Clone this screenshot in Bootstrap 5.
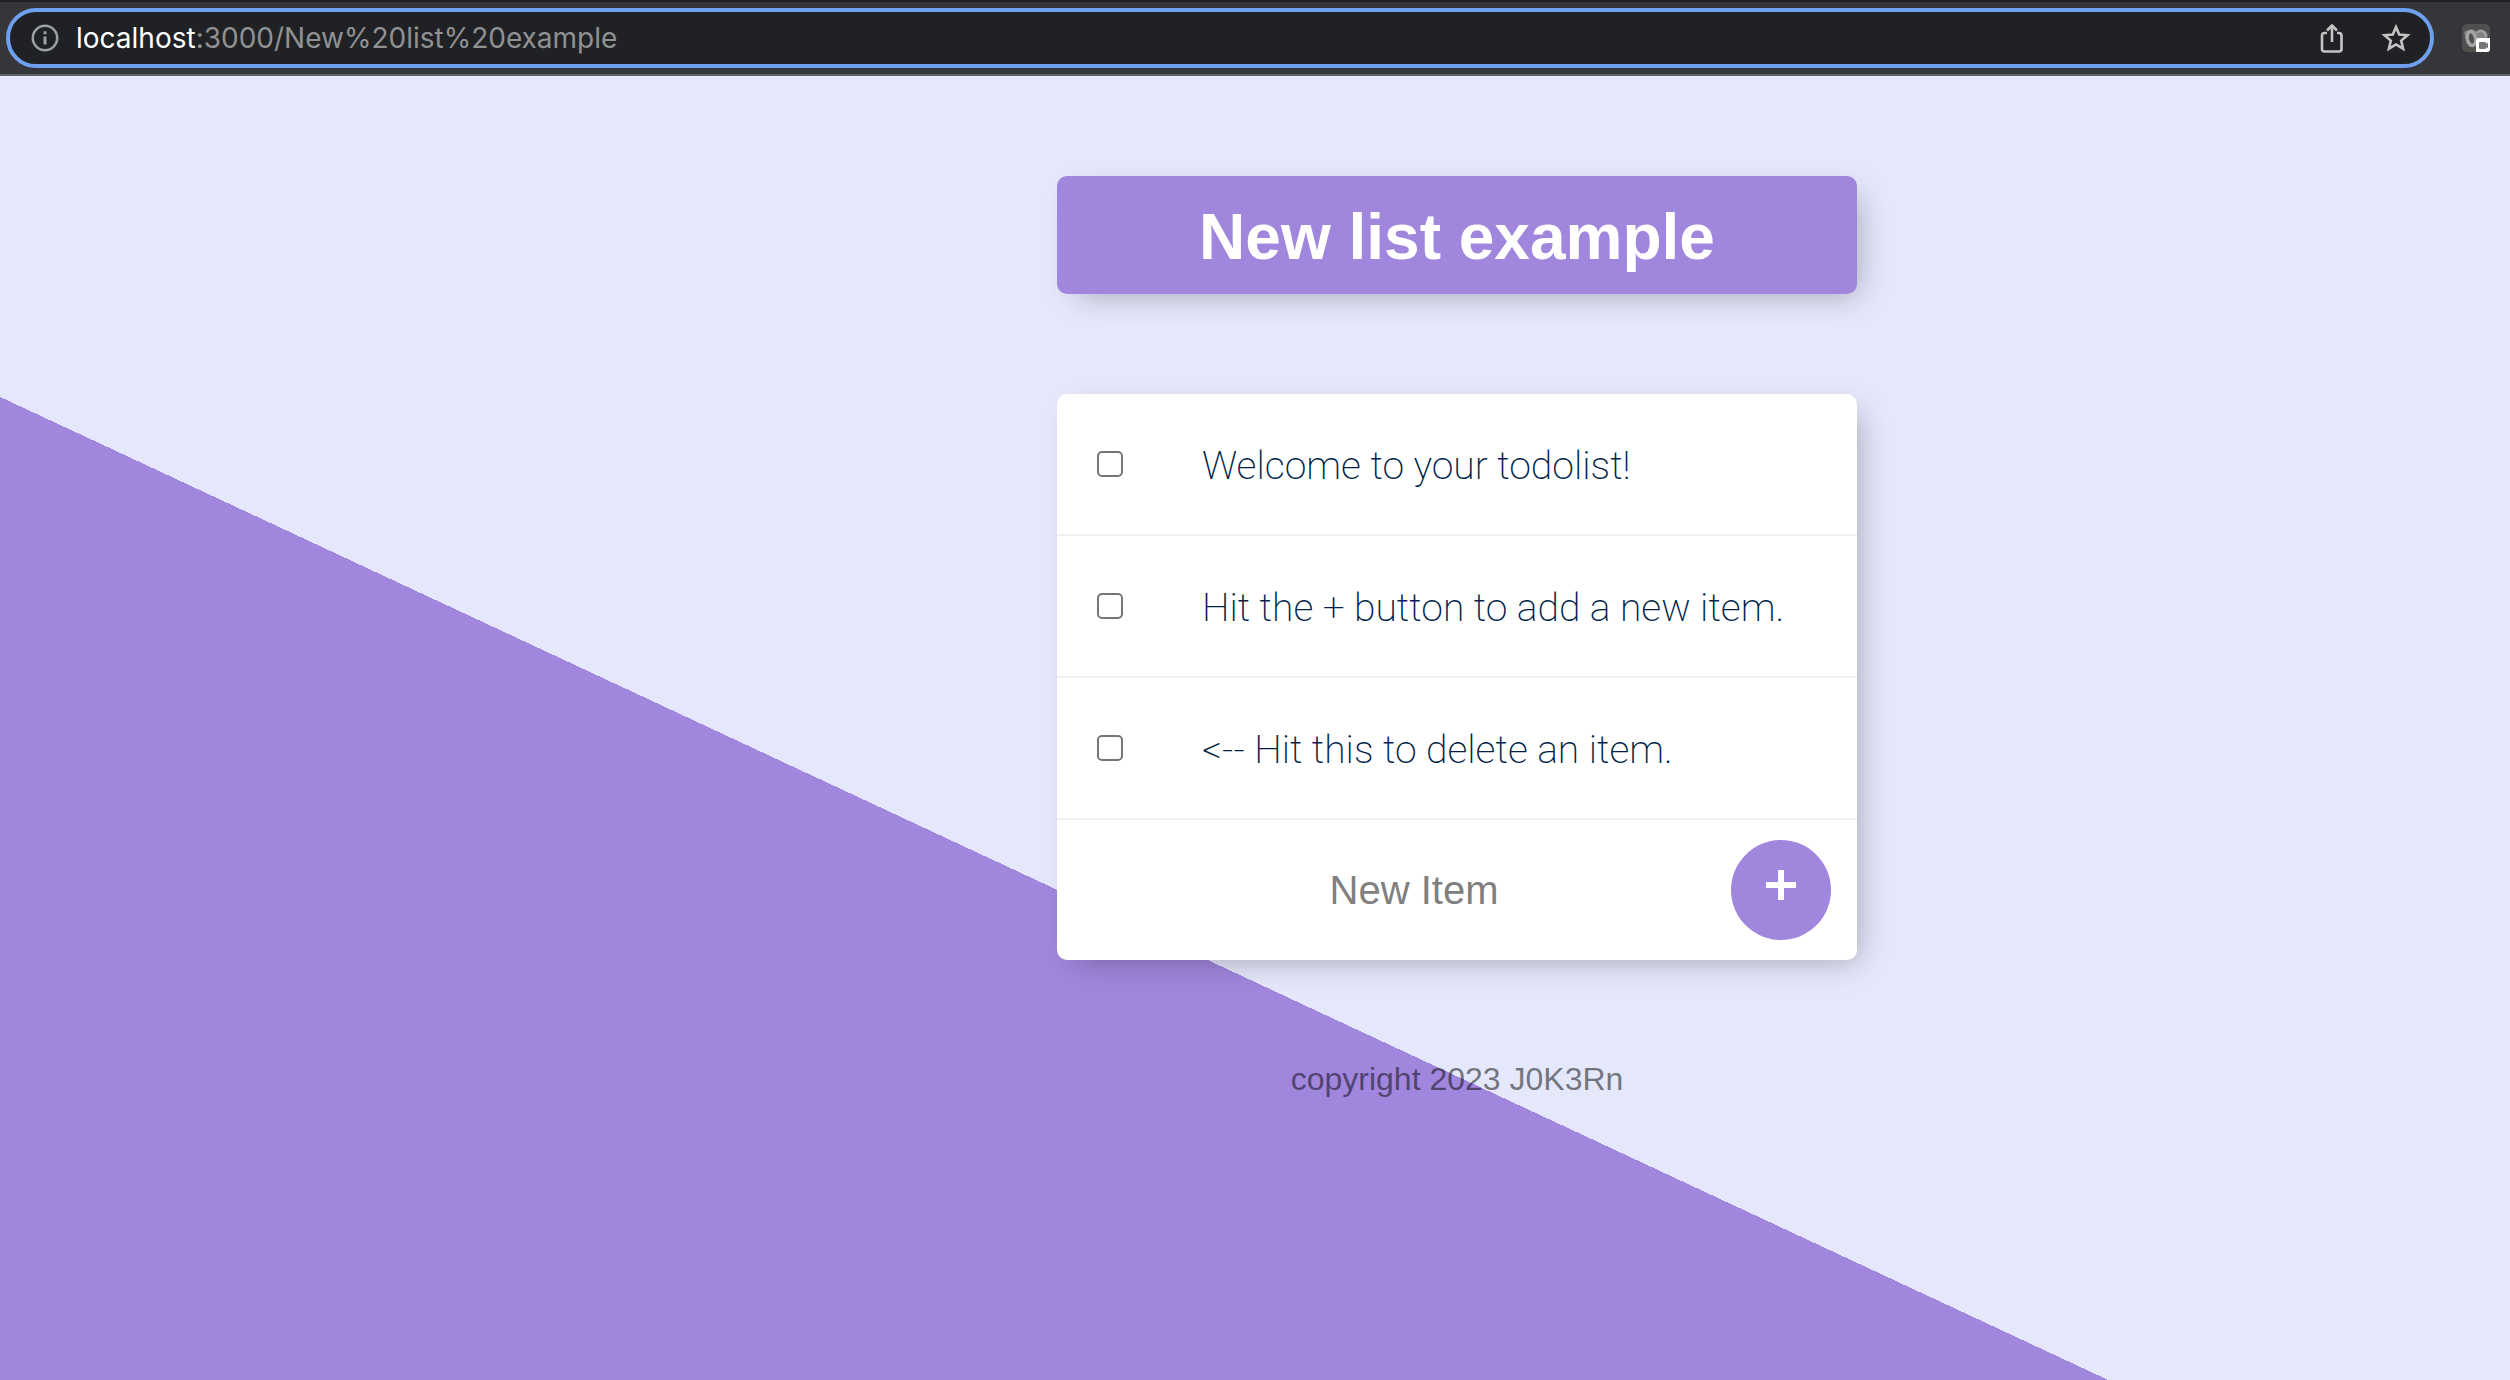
<!DOCTYPE html>
<html lang="en">
<head>
<meta charset="utf-8">
<meta name="viewport" content="width=device-width, initial-scale=1">
<title>New list example</title>
<link rel="stylesheet" href="https://cdn.jsdelivr.net/npm/bootstrap@5.3.0/dist/css/bootstrap.min.css">
<style>
  :root { --purple: #a186dd; --mist: #e5e8fb; --ink: #001f4a; }
  body { background: var(--mist); font-family: "Liberation Sans", Arial, sans-serif; }
  .toolbar { height: 76px; background: #35363a; border-top: 2px solid #202124; border-bottom: 2px solid #5f6065; padding: 0 20px 0 6px; gap: 28px; }
  .address { height: 60px; background: #202124; border: 4px solid #6f9fef; border-radius: 30px; padding: 0 19px 0 20px; }
  .url { font: 28px/36px Inter, sans-serif; color: #909193; margin-left: 16px; outline: 0; }
  .url b { font-weight: 400; color: #fff; }
  .tool { color: #c4c4c4; line-height: 0; }
  .share { margin-right: 30px; }
  .stage { background: linear-gradient(25deg, var(--purple) 891px, var(--mist) 891px); padding: 100px 0 100px 404px; gap: 100px; }
  .panel { width: 800px; border-radius: 10px; box-shadow: 10px 10px 30px -10px rgba(0, 0, 0, .3); }
  .heading { background: var(--purple); color: #fff; padding: 24px 20px 20px; }
  .heading h1 { font-size: 64px; line-height: 74px; }
  .entry { border-bottom: 2px solid #f1f1f1; height: 142px; padding: 0 20px 0 40px; gap: 79px; color: var(--ink); font: 200 39px/46px Roboto, sans-serif; }
  .entry label { padding-top: 4px; }
  .tick { width: 26px; height: 26px; margin: 0; border: 2px solid #767676; }
  .tick.form-check-input[type=checkbox] { border-radius: 5px; }
  .adder { height: 140px; padding: 0 26px 0 40px; }
  .adder input { font-size: 40px; line-height: 46px; }
  .adder input::placeholder { color: #808080; opacity: 1; }
  .plus { width: 100px; height: 100px; background: var(--purple); padding: 0 0 10px; }
  .plus:hover { background: #8f72cf; }
  .copy { width: 800px; font-size: 32px; line-height: 38px; color: rgba(0, 0, 0, .5); }
</style>
</head>
<body class="min-vh-100 d-flex flex-column overflow-hidden">
<header class="toolbar d-flex align-items-center">
  <div class="address d-flex align-items-center flex-grow-1">
    <svg width="30" height="30" viewBox="0 0 30 30" fill="none" stroke="#9aa0a6" stroke-width="2.5" aria-hidden="true"><circle cx="15" cy="15" r="12.2"/><path d="M15 13.5v8M15 8.2v3" stroke-width="3"/></svg>
    <div class="url flex-grow-1" role="textbox" aria-label="Address" contenteditable="true" spellcheck="false"><b>localhost</b>:3000/New%20list%20example</div>
    <button type="button" class="tool share btn p-0 border-0" aria-label="Share">
      <svg width="38" height="34" viewBox="0 0 38 34" fill="none" stroke="#c4c4c4" stroke-width="2.6" stroke-linejoin="round"><path d="M14 12h-2.500q-2.500 0-2.500 2.500v13.500q0 2.500 2.500 2.500h14.500q2.500 0 2.500-2.500v-13.500q0-2.500-2.500-2.500H24M19 21V4.500M14 9.500l5-5 5 5"/></svg>
    </button>
    <button type="button" class="tool btn p-0 border-0" aria-label="Bookmark">
      <svg width="30" height="30" viewBox="0 0 30 30" fill="none" stroke="#c4c4c4" stroke-width="2.600"><path d="M15 4l3.200 7.500 8.300.700-6.300 5.400 1.900 8.100L15 21.400l-7.100 4.300 1.900-8.100-6.300-5.400 8.300-.700z"/></svg>
    </button>
  </div>
  <button type="button" class="tool btn p-0 border-0" aria-label="Extension">
    <svg width="28" height="28" viewBox="0 0 28 28"><rect width="28" height="28" rx="5" fill="#50504f"/><path d="M2 8q2-2 5-2 4-2 8 2 3-3 7-1 3 1 4 5l-3 4H14q0 6-4 7-4 0-5-5Q3 13 2 8z" fill="#808080"/><ellipse cx="9.500" cy="14.500" rx="4.200" ry="7" fill="#505050" stroke="#a5a5a5" stroke-width="3.500" transform="rotate(-12 9.500 14.500)"/><path d="M15 9q2-3 5-2 4 1 4 6" fill="none" stroke="#a0a0a0" stroke-width="2.500"/><path d="M14 17q0-3 3-3h11v11q0 3-3 3H14z" fill="#fff"/><path d="M17 19q0-1 1-1h5q1 0 1 1v.800l2-1v5.400l-2-1v.800q0 1-1 1h-5q-1 0-1-1z" fill="#777"/></svg>
  </button>
</header>
<main class="stage flex-grow-1 d-flex flex-column align-items-center">
  <section class="panel heading text-center"><h1 class="m-0 fw-bold">New list example</h1></section>
  <section class="panel bg-white">
    <div class="entry d-flex align-items-center"><input class="tick form-check-input flex-shrink-0" type="checkbox" id="i1"><label for="i1">Welcome to your todolist!</label></div>
    <div class="entry d-flex align-items-center"><input class="tick form-check-input flex-shrink-0" type="checkbox" id="i2"><label for="i2">Hit the + button to add a new item.</label></div>
    <div class="entry d-flex align-items-center"><input class="tick form-check-input flex-shrink-0" type="checkbox" id="i3"><label for="i3">&lt;-- Hit this to delete an item.</label></div>
    <form class="adder d-flex align-items-center">
      <input class="form-control border-0 shadow-none bg-transparent text-center p-0" type="text" placeholder="New Item" aria-label="New Item" autocomplete="off">
      <button type="submit" class="plus btn border-0 rounded-circle flex-shrink-0" aria-label="Add item"><svg width="30" height="30" viewBox="0 0 30 30" stroke="#fff" stroke-width="6" aria-hidden="true"><path d="M15 0v30M0 15h30"/></svg></button>
    </form>
  </section>
  <footer class="copy text-center">copyright 2023 J0K3Rn</footer>
</main>
<script src="https://cdn.jsdelivr.net/npm/bootstrap@5.3.0/dist/js/bootstrap.bundle.min.js"></script>
</body>
</html>
